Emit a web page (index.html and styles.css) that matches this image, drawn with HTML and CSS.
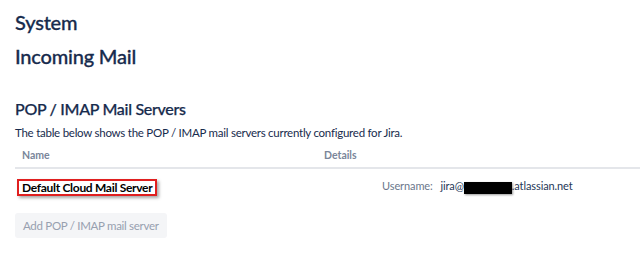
FILE: index.html
```html
<!DOCTYPE html>
<html lang="en">

<head>
    <meta charset="UTF-8">
    <meta name="viewport" content="width=device-width, initial-scale=1.0">
    <title>Incoming Mail</title>
    <link rel="stylesheet" href="styles.css">
</head>

<body>
    <div class="page">
        <h1 class="title">System</h1>
        <h1 class="title">Incoming Mail</h1>

        <h2 class="section-title">POP / IMAP Mail Servers</h2>
        <p class="description">The table below shows the POP / IMAP mail servers currently configured for Jira.</p>

        <table class="servers">
            <thead>
                <tr>
                    <th class="col-name">Name</th>
                    <th>Details</th>
                </tr>
            </thead>
            <tbody>
                <tr>
                    <td class="cell-name"><span class="server-name">Default Cloud Mail Server</span></td>
                    <td class="cell-details">
                        <div class="detail">
                            <span class="detail-label">Username:</span>
                            <span class="detail-value">jira@<span class="redacted"></span>.atlassian.net</span>
                        </div>
                    </td>
                </tr>
            </tbody>
        </table>

        <button class="add-button" disabled>Add POP / IMAP mail server</button>
    </div>
</body>

</html>
```

FILE: styles.css
```css
* {
    margin: 0;
    padding: 0;
    box-sizing: border-box;
}

body {
    margin: 0;
    background: #fff;
    font-family: Lato, "Noto Sans", sans-serif;
    color: #172b4d;
}

.page {
    padding: 10px 0 0 15px;
}

.title {
    font-size: 20px;
    line-height: 24px;
    font-weight: 500;
    letter-spacing: -0.2px;
    -webkit-text-stroke: 0.3px #172b4d;
    margin-bottom: 10px;
}

.section-title {
    font-size: 16px;
    line-height: 20px;
    font-weight: 500;
    letter-spacing: -0.3px;
    -webkit-text-stroke: 0.25px #172b4d;
    margin-top: 31px;
}

.description {
    font-size: 11.5px;
    line-height: 16px;
    letter-spacing: -0.25px;
    margin-top: 6px;
}

.servers {
    width: 100%;
    border-collapse: collapse;
    margin-top: 2px;
}

.servers th {
    text-align: left;
    font-size: 10.5px;
    line-height: 14px;
    font-weight: 700;
    color: #7a869a;
    padding: 5px 7px;
    border-bottom: 2px solid #e4e6ea;
}

.col-name {
    width: 302px;
}

.servers td {
    vertical-align: top;
    padding: 7px 7px 6px;
}

.servers td.cell-name {
    padding-left: 2px;
}

.server-name {
    display: inline-block;
    font-size: 12px;
    line-height: 13px;
    font-weight: 700;
    letter-spacing: -0.3px;
    color: #000;
    border: 2px solid #e01f1f;
    padding: 0 3px;
    box-shadow: 2px 2px 3px rgba(0, 0, 0, 0.35);
}

.detail {
    font-size: 11px;
    line-height: 16px;
    letter-spacing: -0.1px;
    margin-left: 58px;
    padding-top: 1.5px;
}

.detail-label {
    color: #6b778c;
    margin-right: 5px;
}

.detail-value {
    color: #253858;
}

.redacted {
    display: inline-block;
    width: 48px;
    height: 12px;
    background: #000;
    vertical-align: -4px;
    box-shadow: 1px 1px 2px rgba(0, 0, 0, 0.4);
}

.add-button {
    margin-top: 11px;
    height: 25px;
    padding: 0 8px;
    border: none;
    border-radius: 3px;
    background: #f4f5f7;
    color: #97a0af;
    font-family: Lato, "Noto Sans", sans-serif;
    font-size: 11.5px;
    letter-spacing: -0.3px;
}
```
